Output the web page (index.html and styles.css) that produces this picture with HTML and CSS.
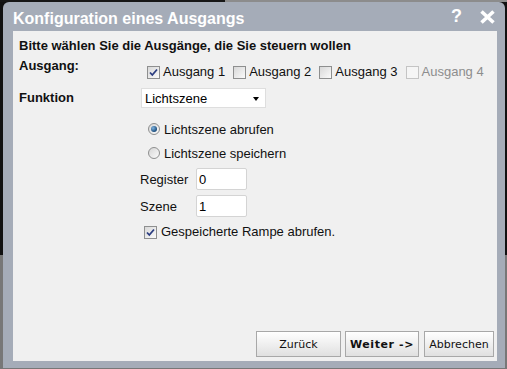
FILE: index.html
```html
<!DOCTYPE html>
<html lang="de">
<head>
    <meta charset="UTF-8">
    <meta name="viewport" content="width=device-width, initial-scale=1.0">
    <title>Konfiguration eines Ausgangs</title>
    <link rel="stylesheet" href="styles.css">
</head>
<body>
    <div class="dialog">
        <div class="titlebar">
            <span class="title">Konfiguration eines Ausgangs</span>
            <span class="help">?</span>
            <svg class="close" width="15" height="14" viewBox="0 0 15 14">
                <path d="M1.5 1.5 L13.5 12.5 M13.5 1.5 L1.5 12.5" stroke="#fff" stroke-width="3.6" fill="none"/>
            </svg>
        </div>

        <div class="content">
            <div class="heading">Bitte wählen Sie die Ausgänge, die Sie steuern wollen</div>

            <div class="row row-outputs">
                <div class="label">Ausgang:</div>
                <div class="outputs">
                    <label class="check">
                        <span class="box"><svg width="11" height="11" viewBox="0 0 11 11"><path d="M2 5.5 L4.3 8 L9 2.5" stroke="#2b3d80" stroke-width="1.8" fill="none"/></svg></span>
                        Ausgang 1
                    </label>
                    <label class="check"><span class="box"></span>Ausgang 2</label>
                    <label class="check"><span class="box"></span>Ausgang 3</label>
                    <label class="check disabled"><span class="box"></span>Ausgang 4</label>
                </div>
            </div>

            <div class="row row-function">
                <div class="label">Funktion</div>
                <div class="select">
                    <select id="function">
                        <option>Lichtszene</option>
                    </select>
                </div>
            </div>

            <div class="radios">
                <label class="radio"><span class="dot checked"></span>Lichtszene abrufen</label>
                <label class="radio"><span class="dot"></span>Lichtszene speichern</label>
            </div>

            <div class="param">
                <span class="param-label">Register</span>
                <input type="text" value="0">
            </div>
            <div class="param param-scene">
                <span class="param-label">Szene</span>
                <input type="text" value="1">
            </div>

            <label class="check ramp">
                <span class="box"><svg width="11" height="11" viewBox="0 0 11 11"><path d="M2 5.5 L4.3 8 L9 2.5" stroke="#2b3d80" stroke-width="1.8" fill="none"/></svg></span>
                Gespeicherte Rampe abrufen.
            </label>

            <div class="footer">
                <button class="btn-back">Zurück</button>
                <button class="btn-next">Weiter -&gt;</button>
                <button class="btn-cancel">Abbrechen</button>
            </div>
        </div>
    </div>
</body>
</html>
```

FILE: styles.css
```css
/* Dialog: Konfiguration eines Ausgangs */
body {
    margin: 0;
    height: 369px;
    overflow: hidden;
    font-family: "Liberation Sans", Arial, sans-serif;
    font-size: 13px;
    color: #111;
    background:
        linear-gradient(to right, #161616 225px, #8c8c8c 225px) top / 100% 2px no-repeat,
        linear-gradient(#111 255px, #777 255px);
}

.dialog {
    margin: 2px 2px 0 3px;
    height: 366px;
    box-sizing: border-box;
    background-color: #a5acb8;
    border-radius: 6px 6px 0 0;
    padding: 0 8px 7px 10px;
    display: flex;
    flex-direction: column;
}

.titlebar {
    height: 29px;
    flex-shrink: 0;
    display: flex;
    align-items: flex-start;
    color: #fff;
    font-weight: bold;
    padding-right: 2px;
}

.title {
    font-size: 16px;
    line-height: 18px;
    margin-top: 8px;
}

.help {
    font-size: 18px;
    line-height: 18px;
    margin-left: auto;
    margin-top: 5px;
    margin-right: 18px;
}

.close {
    margin-top: 8px;
}

.content {
    flex: 1;
    background-color: #f0f0f0;
    padding: 7px 3px 4px 6px;
    display: flex;
    flex-direction: column;
    align-items: flex-start;
}

.heading {
    font-weight: bold;
    line-height: 16px;
}

.row {
    display: flex;
}

.label {
    width: 122px;
    font-weight: bold;
    line-height: 16px;
}

.row-outputs {
    margin-top: 4px;
    align-items: flex-start;
}

.outputs {
    display: flex;
    gap: 8px;
    padding-top: 6px;
    margin-left: 6px;
}

.check {
    display: flex;
    align-items: center;
    gap: 3px;
    line-height: 16px;
}

.box {
    width: 13px;
    height: 13px;
    box-sizing: border-box;
    border: 1px solid #8e8f8f;
    background: linear-gradient(135deg, #d8d8d8, #fafafa);
    display: flex;
    align-items: center;
    justify-content: center;
}

.check.disabled {
    color: #8d8d8d;
}

.check.disabled .box {
    border-color: #c4c4c4;
    background: #f5f5f5;
}

.row-function {
    margin-top: 8px;
    align-items: center;
    height: 20px;
}

.select {
    position: relative;
}

.select select {
    appearance: none;
    width: 125px;
    height: 20px;
    border: 1px solid #dedede;
    background-color: #fff;
    font-family: "Liberation Sans", Arial, sans-serif;
    font-size: 13px;
    color: #000;
    padding: 0 3px;
    border-radius: 0;
}

.select::after {
    content: "";
    position: absolute;
    right: 7px;
    top: 9px;
    border-left: 3px solid transparent;
    border-right: 3px solid transparent;
    border-top: 4px solid #000;
}

.radios {
    margin-top: 9px;
    margin-left: 129px;
}

.radio {
    display: flex;
    align-items: center;
    gap: 4px;
    height: 24px;
}

.dot {
    width: 12px;
    height: 12px;
    box-sizing: border-box;
    border-radius: 50%;
    border: 1px solid #8e8f8f;
    background: linear-gradient(135deg, #d6d6d6, #fbfbfb);
    display: flex;
    align-items: center;
    justify-content: center;
}

.dot.checked::after {
    content: "";
    width: 6px;
    height: 6px;
    border-radius: 50%;
    background: radial-gradient(circle at 35% 35%, #7fb4e0, #1a4c7c 70%);
}

.param {
    display: flex;
    align-items: center;
    margin-top: 3px;
    margin-left: 121px;
    height: 22px;
}

.param-scene {
    margin-top: 5px;
}

.param-label {
    width: 56px;
}

.param input {
    width: 51px;
    height: 22px;
    box-sizing: border-box;
    border: 1px solid #d4d4d4;
    border-radius: 2px;
    background-color: #fff;
    font-family: "Liberation Sans", Arial, sans-serif;
    font-size: 13px;
    color: #000;
    padding: 0 2px;
}

.ramp {
    margin-top: 7px;
    margin-left: 125px;
    gap: 4px;
}

.footer {
    margin-top: auto;
    align-self: stretch;
    display: flex;
    justify-content: flex-end;
    gap: 4px;
}

.footer button {
    height: 26px;
    border: 1px solid #a8a8a8;
    background: linear-gradient(#ffffff, #e0e0e0);
    font-family: "DejaVu Sans", Tahoma, sans-serif;
    font-size: 11px;
    color: #111;
    padding: 0;
    cursor: pointer;
}

.btn-back {
    width: 85px;
}

.btn-next {
    width: 74px;
    font-weight: bold;
    letter-spacing: 0.6px;
    margin-right: 1px;
}

.btn-cancel {
    width: 70px;
}
```
